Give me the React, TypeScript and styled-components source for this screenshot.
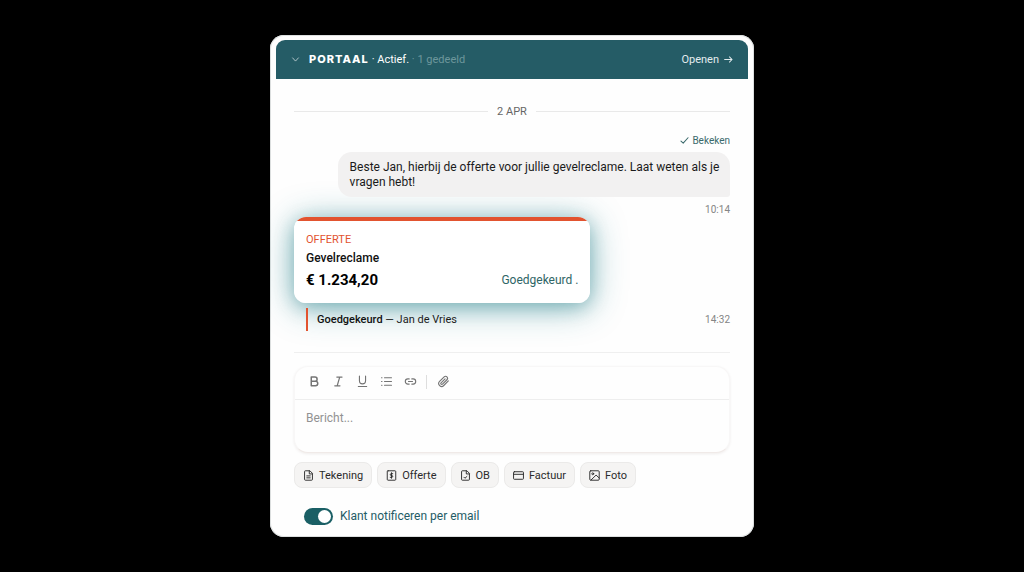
import React, { useState } from "react";
import styled, { createGlobalStyle } from "styled-components";

const teal = "#255c66";
const orange = "#e2532f";

const GlobalStyle = createGlobalStyle`
  * { box-sizing: border-box; }
  body {
    margin: 0;
    background: #000;
    color: #1b1b1b;
    font-family: Roboto, "Liberation Sans", sans-serif;
    font-size: 12px;
    line-height: 15px;
  }
  button, input, textarea { font: inherit; color: inherit; margin: 0; }
`;

const Page = styled.main`
  min-height: 100vh;
  display: flex;
  align-items: center;
  justify-content: center;
  padding: 16px;
`;

const Panel = styled.section`
  width: 100%;
  max-width: 484px;
  padding: 5px 6px;
  overflow: hidden;
  border-radius: 14px;
  background: #fefefe;
  box-shadow: inset 0 0 0 1px #dcdfdf;
`;

const Header = styled.header`
  display: flex;
  align-items: center;
  height: 39px;
  padding: 0 15px;
  border-radius: 9px 9px 0 0;
  background: ${teal};
  color: #fff;
  font-size: 11px;
`;

const IconButton = styled.button`
  display: flex;
  align-items: center;
  justify-content: center;
  padding: 0;
  border: 0;
  background: none;
  cursor: pointer;
`;

const Title = styled.h1`
  margin: 0 3px 0 9px;
  font: 800 11px/15px Inter, sans-serif;
  letter-spacing: 1px;
`;

const Status = styled.span`
  white-space: pre;
`;

const Shared = styled.span`
  white-space: pre;
  color: #6d979c;
`;

const OpenLink = styled.a`
  display: flex;
  align-items: center;
  gap: 5px;
  margin-left: auto;
  color: #e3ecee;
  text-decoration: none;
`;

const Body = styled.div`
  padding: 25px 18px 7px;
`;

const DateDivider = styled.div`
  display: flex;
  align-items: center;
  gap: 9px;
  margin-bottom: 14px;
  color: #666;
  font-size: 11px;
  &::before, &::after {
    content: "";
    flex: 1;
    height: 1px;
    background: #e9e9e9;
  }
`;

const Thread = styled.div`
  display: flex;
  flex-direction: column;
`;

const Seen = styled.div`
  display: flex;
  align-items: center;
  align-self: flex-end;
  gap: 3px;
  margin-bottom: 4px;
  color: #3b6a6c;
  font-size: 10px;
`;

const Bubble = styled.p`
  align-self: flex-end;
  z-index: 1;
  width: 90%;
  margin: 0 0 5px;
  padding: 8px 8px 7px 12px;
  border-radius: 14px 14px 3px 14px;
  background: #f2f1f1;
`;

const Time = styled.time`
  align-self: flex-end;
  color: #858585;
  font-size: 10px;
`;

const Offer = styled.article`
  width: 68%;
  height: 86px;
  padding: 15px 12px 0;
  border-radius: 12px;
  background: linear-gradient(${orange} 4px, #fff 4px);
  box-shadow: 0 4px 36px rgba(20, 125, 135, 0.45), 0 4px 18px rgba(20, 110, 120, 0.35);
`;

const OfferKind = styled.div`
  color: ${orange};
  font-size: 11px;
`;

const OfferName = styled.h2`
  margin: 3px 0 4px;
  font-size: 12px;
  line-height: 17px;
  font-weight: 500;
  color: #111;
`;

const OfferTotal = styled.div`
  display: flex;
  align-items: center;
  justify-content: space-between;
  color: #2f6566;
`;

const Price = styled.strong`
  color: #000;
  font-size: 15px;
  line-height: 18px;
`;

const Approval = styled.div`
  display: flex;
  align-items: center;
  justify-content: space-between;
  margin-top: 5px;
  padding-left: 12px;
  ${Time} { align-self: center; }
`;

const ApprovalNote = styled.blockquote`
  margin: 0;
  padding: 4px 0 4px 9px;
  border-left: 2px solid ${orange};
  font-size: 11px;
  strong { font-weight: 500; color: #111; }
`;

const Compose = styled.form`
  margin-top: 21px;
  padding-top: 13px;
  border-top: 1px solid #efefef;
`;

const Editor = styled.div`
  overflow: hidden;
  border: 1px solid #f8f7f7;
  border-bottom-color: #f0eae8;
  border-radius: 14px;
  background: #fefefe;
  box-shadow: 0 1px 3px rgba(60, 20, 10, 0.08);
`;

const Toolbar = styled.div`
  display: flex;
  align-items: center;
  height: 33px;
  padding: 0 7px 3px;
  border-bottom: 1px solid #eee;
  color: #747474;
  ${IconButton} { width: 24px; height: 24px; }
`;

const ToolSeparator = styled.span`
  width: 1px;
  height: 14px;
  margin: 0 4px;
  background: #dedede;
`;

const Message = styled.textarea`
  display: block;
  width: 100%;
  height: 52px;
  padding: 11px;
  border: 0;
  outline: 0;
  resize: none;
  background: transparent;
  &::placeholder { color: #929292; opacity: 1; }
`;

const Chips = styled.div`
  display: flex;
  flex-wrap: wrap;
  gap: 5px;
  margin-top: 9px;
`;

const Chip = styled.button`
  display: flex;
  align-items: center;
  gap: 5px;
  height: 26px;
  padding: 0 8px;
  border: 1px solid #ebeae9;
  border-radius: 8px;
  background: #f5f4f3;
  color: #2b2b2b;
  font-size: 11px;
  cursor: pointer;
`;

const Notify = styled.label`
  display: flex;
  align-items: center;
  gap: 7px;
  width: fit-content;
  margin: 20px 0 0 10px;
  color: ${teal};
`;

const Switch = styled.input`
  appearance: none;
  width: 29px;
  height: 17px;
  padding: 2px;
  border-radius: 9px;
  background: #b9c4c5;
  cursor: pointer;
  &::before {
    content: "";
    display: block;
    width: 13px;
    height: 13px;
    border-radius: 50%;
    background: #fff;
  }
  &:checked { background: #1a5f65; }
  &:checked::before { margin-left: auto; }
`;

type IconProps = { size?: number; weight?: number; children: React.ReactNode };

const Icon = ({ size = 14, weight = 1.2, children }: IconProps) => (
  <svg width={size} height={size} viewBox="0 0 14 14" fill="none" stroke="currentColor"
    strokeWidth={weight} strokeLinecap="round" strokeLinejoin="round" aria-hidden="true">
    {children}
  </svg>
);

const tools = [
  { label: "Vet", weight: 1.6, art: <path d="M3.5 2.2h4a2.3 2.3 0 0 1 0 4.6h-4zM3.5 6.8h4.6a2.4 2.4 0 0 1 0 4.8H3.5z" /> },
  { label: "Cursief", weight: 1.3, art: <path d="M5.2 2.2h5.6M3 11.6h5.6M8.3 2.2 5.6 11.6" /> },
  { label: "Onderstrepen", weight: 1.2, art: <path d="M3.7 1.2v5a3.3 3.3 0 0 0 6.6 0v-5M2.5 12.4h9" /> },
  { label: "Lijst", weight: 1.1, art: <path d="M4.8 3h7.6M4.8 7h7.6M4.8 11h7.6M1.6 3h.6M1.6 7h.6M1.6 11h.6" /> },
  { label: "Link", weight: 1.2, art: <path d="M5.6 9.8H4.2a2.8 2.8 0 0 1 0-5.6h1.4M8.4 4.2h1.4a2.8 2.8 0 0 1 0 5.6H8.4M4.8 7h4.4" /> },
];

const page = "M8.3 1H3a1 1 0 0 0-1 1v10a1 1 0 0 0 1 1h8a1 1 0 0 0 1-1V4.7zM8 1.2V5h3.7";

const attachments = [
  { label: "Tekening", art: <path d={page + "M4.8 7.5h4.4M4.8 10h4.4"} /> },
  { label: "Offerte", art: <><rect x="1.6" y="1" width="10.8" height="12" rx="1" /><path d="M8.6 4.7H6.6a1.1 1.1 0 0 0 0 2.3h.8a1.1 1.1 0 0 1 0 2.3H5.4M7 3.5v7" /></> },
  { label: "OB", art: <path d={page + "M5 9.2l1.3 1.3L8.8 8.2"} /> },
  { label: "Factuur", art: <><rect x="0.7" y="2.2" width="12.6" height="9.6" rx="1" /><path d="M1 5.5h12" /></> },
  { label: "Foto", art: <><rect x="1" y="1" width="12" height="12" rx="1.2" /><circle cx="4.8" cy="4.8" r="1.2" /><path d="M2.5 12.8 9 6.5l3.9 3.6" /></> },
];

export default function App() {
  const [notify, setNotify] = useState(true);
  return (
    <>
      <GlobalStyle />
      <Page>
        <Panel>
          <Header>
            <IconButton aria-label="Inklappen">
              <Icon size={9} weight={1.5}><path d="M2.5 4.5 7 9.5l4.5-5" opacity="0.65" /></Icon>
            </IconButton>
            <Title>PORTAAL</Title>
            <Status>· Actief.</Status>
            <Shared> · 1 gedeeld</Shared>
            <OpenLink href="#portaal">
              Openen
              <Icon size={9} weight={1.6}><path d="M1 7h11.5M8.5 3l4 4-4 4" /></Icon>
            </OpenLink>
          </Header>
          <Body>
            <DateDivider>2 APR</DateDivider>
            <Thread>
              <Seen>
                <Icon size={9} weight={1.6}><path d="M1.5 7.8 5 11.2l7.5-8.5" /></Icon>
                Bekeken
              </Seen>
              <Bubble>
                Beste Jan, hierbij de offerte voor jullie gevelreclame. Laat weten als je vragen hebt!
              </Bubble>
              <Time>10:14</Time>
              <Offer>
                <OfferKind>OFFERTE</OfferKind>
                <OfferName>Gevelreclame</OfferName>
                <OfferTotal>
                  <Price>€ 1.234,20</Price>
                  <span>Goedgekeurd .</span>
                </OfferTotal>
              </Offer>
              <Approval>
                <ApprovalNote><strong>Goedgekeurd</strong> — Jan de Vries</ApprovalNote>
                <Time>14:32</Time>
              </Approval>
            </Thread>
            <Compose onSubmit={(event) => event.preventDefault()}>
              <Editor>
                <Toolbar role="toolbar" aria-label="Opmaak">
                  {tools.map((tool) => (
                    <IconButton key={tool.label} type="button" aria-label={tool.label}>
                      <Icon size={13} weight={tool.weight}>{tool.art}</Icon>
                    </IconButton>
                  ))}
                  <ToolSeparator />
                  <IconButton type="button" aria-label="Bijlage">
                    <Icon size={13}>
                      <path d="M12.2 6.4 7.3 11.3a3.1 3.1 0 0 1-4.5-4.4l4.9-4.8a2.1 2.1 0 0 1 3 3L5.9 9.9a1 1 0 0 1-1.5-1.5l4.3-4.2" />
                    </Icon>
                  </IconButton>
                </Toolbar>
                <Message aria-label="Bericht" placeholder="Bericht..." />
              </Editor>
              <Chips>
                {attachments.map((item) => (
                  <Chip key={item.label} type="button">
                    <Icon size={11} weight={1.2}>{item.art}</Icon>
                    {item.label}
                  </Chip>
                ))}
              </Chips>
              <Notify>
                <Switch type="checkbox" role="switch" checked={notify}
                  onChange={(event) => setNotify(event.target.checked)} />
                Klant notificeren per email
              </Notify>
            </Compose>
          </Body>
        </Panel>
      </Page>
    </>
  );
}
